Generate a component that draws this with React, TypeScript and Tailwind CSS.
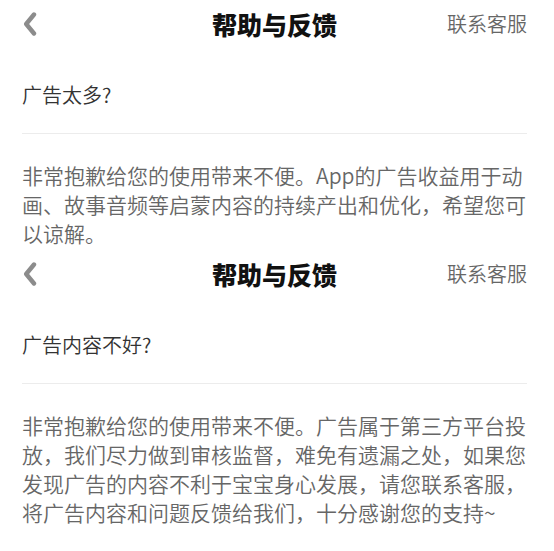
const faqs = [
  {
    question: "广告太多?",
    answer: "非常抱歉给您的使用带来不便。App的广告收益用于动画、故事音频等启蒙内容的持续产出和优化，希望您可以谅解。",
  },
  {
    question: "广告内容不好?",
    answer:
      "非常抱歉给您的使用带来不便。广告属于第三方平台投放，我们尽力做到审核监督，难免有遗漏之处，如果您发现广告的内容不利于宝宝身心发展，请您联系客服，将广告内容和问题反馈给我们，十分感谢您的支持~",
  },
];

type Faq = (typeof faqs)[number];

function BackIcon() {
  return (
    <svg width="14" height="24" viewBox="0 0 14 24" className="ml-px">
      <polyline
        points="11,2.5 3.2,12 11,21.5"
        fill="none"
        stroke="#8c8c8c"
        strokeWidth="4.4"
        strokeLinecap="round"
        strokeLinejoin="round"
      />
    </svg>
  );
}

function HelpScreen({ faq }: { faq: Faq }) {
  return (
    <section className="bg-white pl-[22px] pr-[27px] pb-[2px]">
      {/* 顶部导航 */}
      <header className="grid h-[48px] grid-cols-[1fr_auto_1fr] items-center">
        <div className="flex items-center">
          <BackIcon />
        </div>
        <h1 className="text-[25px] font-black leading-none text-[#111]">帮助与反馈</h1>
        <span className="justify-self-end text-[20px] font-[350] leading-none text-[#666]">联系客服</span>
      </header>

      <h2 className="pt-[35px] pb-[26px] text-[20px] font-[350] leading-[24px] text-[#333]">{faq.question}</h2>
      <div className="h-px bg-[#ececec]" />
      <p className="pt-[27px] text-[21px] font-[350] leading-[29px] text-[#666]">{faq.answer}</p>
    </section>
  );
}

export default function App() {
  return (
    <div
      className="min-h-screen w-[554px] bg-white"
      style={{ fontFamily: '"Noto Sans CJK SC", "Noto Sans", sans-serif' }}
    >
      {faqs.map((faq) => (
        <HelpScreen key={faq.question} faq={faq} />
      ))}
    </div>
  );
}
